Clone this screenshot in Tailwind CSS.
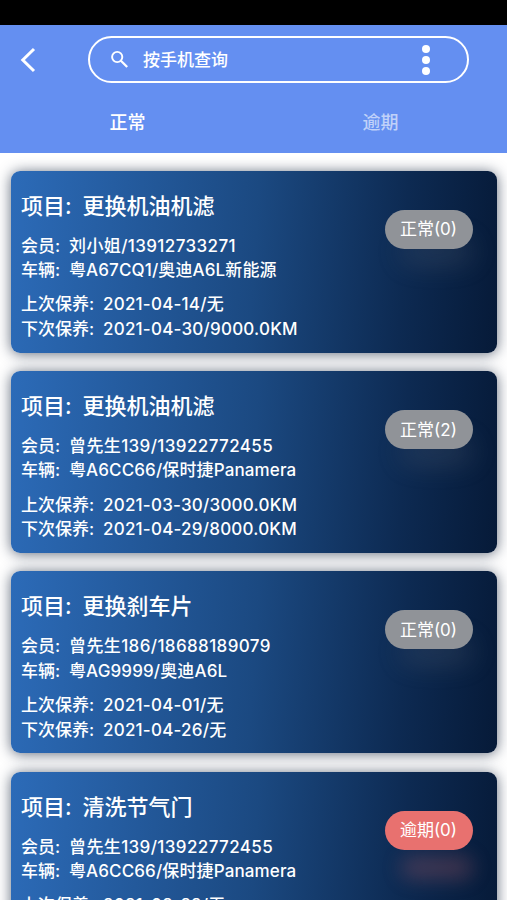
<!DOCTYPE html>
<html lang="zh-CN">
<head>
  <meta charset="UTF-8">
  <meta name="viewport" content="width=device-width, initial-scale=1.0">
  <title>保养提醒</title>
  <script src="https://cdn.jsdelivr.net/npm/@tailwindcss/browser@4"></script>
</head>
<body class="h-[900px] overflow-hidden bg-white font-['Inter','Noto_Sans_CJK_SC',sans-serif] text-white">
  <div class="h-[25px] bg-black"></div>

  <header class="h-[127.5px] bg-[#648ff1]">
    <div class="flex items-start pt-[11px]">
      <svg class="mt-[10.5px] ml-[20px] h-[26px] w-[16px]" viewBox="0 0 16 26" fill="none" stroke="currentColor" stroke-width="3">
        <path d="M14 2 L2.8 13 L14 24" />
      </svg>
      <div class="ml-[52px] flex h-[47px] w-[381px] items-center rounded-full border-2 border-white pl-[20px]">
        <svg class="h-[19px] w-[19px]" viewBox="0 0 19 19" fill="none" stroke="currentColor" stroke-width="1.9">
          <circle cx="7.2" cy="7" r="5.1" />
          <path d="M10.9 10.8 L17.2 17" stroke-width="2.3" />
        </svg>
        <span class="ml-[14px] pt-[2px] text-[17px] leading-none font-medium">按手机查询</span>
        <svg class="mr-[36px] ml-auto h-[32px] w-[10px]" viewBox="0 0 10 32" fill="currentColor">
          <circle cx="5" cy="5" r="4" />
          <circle cx="5" cy="16" r="4" />
          <circle cx="5" cy="27" r="4" />
        </svg>
      </div>
    </div>
    <div class="mt-[28px] grid grid-cols-2 pl-px text-center text-[18px] leading-[24px] font-medium">
      <a>正常</a>
      <a class="text-white/60">逾期</a>
    </div>
  </header>

  <main id="list" class="flex flex-col gap-[18.4px] px-[10.5px] pt-[18px]"></main>

  <script>
    const records = [
      { item: "更换机油机滤", member: "刘小姐/13912733271", car: "粤A67CQ1/奥迪A6L新能源", last: "2021-04-14/无", next: "2021-04-30/9000.0KM", count: 0 },
      { item: "更换机油机滤", member: "曾先生139/13922772455", car: "粤A6CC66/保时捷Panamera", last: "2021-03-30/3000.0KM", next: "2021-04-29/8000.0KM", count: 2 },
      { item: "更换刹车片", member: "曾先生186/18688189079", car: "粤AG9999/奥迪A6L", last: "2021-04-01/无", next: "2021-04-26/无", count: 0 },
      { item: "清洗节气门", member: "曾先生139/13922772455", car: "粤A6CC66/保时捷Panamera", last: "2021-02-22/无", next: "2021-03-24/无", count: 0, overdue: true },
    ];

    const row = (label, value, width, spacing = "") =>
      `<div class="flex"><span class="${width} shrink-0">${label}:</span><span class="${spacing}">${value}</span></div>`;

    const badge = (r) => r.overdue
      ? `<div class="mt-[39px] mr-[24px] flex h-[39px] w-[88px] items-center justify-center rounded-full bg-[#e8716f] pt-px text-[17px] font-normal shadow-[8px_37px_20px_-8px_#e8716f40]">逾期(${r.count})</div>`
      : `<div class="mt-[39px] mr-[24px] flex h-[39px] w-[88px] items-center justify-center rounded-full bg-[#909398] pt-px text-[17px] font-normal shadow-[8px_22px_28px_-8px_#90939833]">正常(${r.count})</div>`;

    document.getElementById("list").innerHTML = records.map((r) => `
      <section class="flex h-[182px] shrink-0 items-start justify-between rounded-[9px] bg-linear-[94deg,#2c6bb8_0%,#1b4981_50%,#0d2a52_80%,#061a38_100%] pl-[10.5px] text-[17px] leading-[24.4px] font-medium whitespace-nowrap shadow-[0_1px_14px_#1c2840b0]">
        <div class="pt-[20px]">
          <div class="mb-[12px] text-[22px] leading-[31px]">${row("项目", r.item, "w-[61.5px]")}</div>
          ${row("会员", r.member, "w-[48px]", "tracking-[0.38px]")}
          ${row("车辆", r.car, "w-[48px]", "tracking-[0.12px]")}
          <div class="mt-[10px]">
            ${row("上次保养", r.last, "w-[82px]", "tracking-[0.22px]")}
            ${row("下次保养", r.next, "w-[82px]", "tracking-[0.22px]")}
          </div>
        </div>
        ${badge(r)}
      </section>`).join("");
  </script>
</body>
</html>
